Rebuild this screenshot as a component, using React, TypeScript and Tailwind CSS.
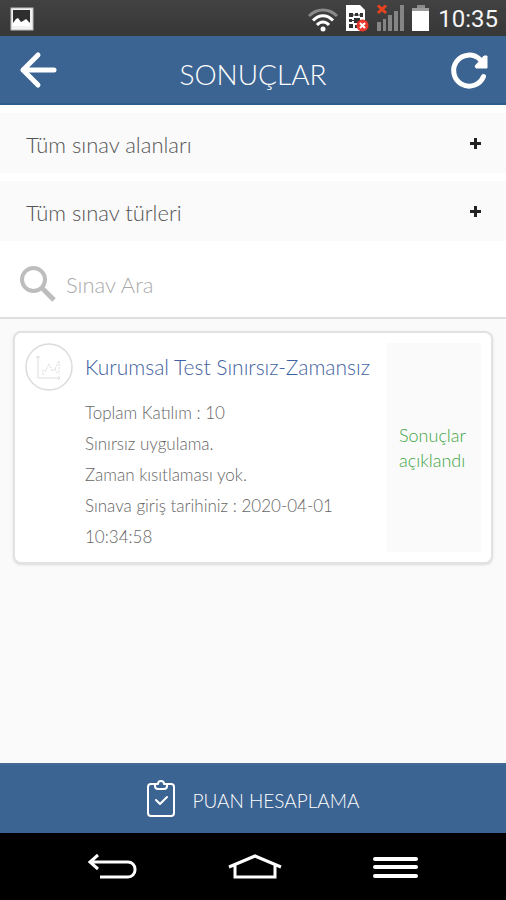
const filters = ["Tüm sınav alanları", "Tüm sınav türleri"];

const details = [
  "Toplam Katılım : 10",
  "Sınırsız uygulama.",
  "Zaman kısıtlaması yok.",
  "Sınava giriş tarihiniz : 2020-04-01 10:34:58",
];

function StatusBar() {
  return (
    <div className="flex h-9 items-center justify-between bg-linear-to-b from-[#424242] to-[#373737] px-2">
      <svg width="28" height="28" viewBox="0 0 28 28" fill="none">
        <rect x="3" y="4" width="22" height="22" fill="#f2f2f2" stroke="#bdbdbd" strokeWidth="1" />
        <rect x="5" y="6" width="17" height="16" fill="#2e2e2e" />
        <path d="M5 19l3-4 2-1 3 4 2-1 3-2 4 4v3H5z" fill="#fff" />
      </svg>
      <div className="flex items-center gap-2">
        <svg width="122" height="32" viewBox="0 0 122 32" fill="none">
          <path d="M1 14C9 6 21 6 29 14" stroke="#8a8a8a" strokeWidth="3" />
          <path d="M5 18.500C11 12 19 12 25 18.500" stroke="#fff" strokeWidth="3" />
          <path d="M9 23C12.500 19 17.500 19 21 23" stroke="#fff" strokeWidth="3" />
          <circle cx="15" cy="27" r="2.500" fill="#fff" />
          <path d="M38 3h14l5 5v21H38z" fill="#fff" />
          <path d="M41 11h4v4h-4zM47 11h3v3h-3zM52 11h3v4h-3zM41 17h3v3h-3zM46 16h6v5h-6zM41 22h4v4h-4zM47 23h3v3h-3z" fill="#333" />
          <path d="M45 13h7M44 18.500h3M52 18.500h3" stroke="#333" strokeWidth="1" />
          <circle cx="54.500" cy="23.500" r="6" fill="#e8372b" />
          <path d="M52 21l5 5M57 21l-5 5" stroke="#fff" strokeWidth="2" />
          <path d="M69 20h4v9h-4zM75 17h3v12h-3zM80 13h4v16h-4zM86 9h4v20h-4zM92 3h4v26h-4z" fill="#858585" />
          <path d="M70 3.500l8 7.500M78 3.500l-8 7.500" stroke="#e8431f" strokeWidth="3" />
          <path d="M109 3h8v4h-8z" fill="#8a8a8a" />
          <path d="M104 7h17v22h-17z" fill="#fff" />
          <path d="M104 6h17v3h-17z" fill="#9c9c9c" />
        </svg>
        <span className="pt-0.5 font-['Roboto',sans-serif] text-2xl text-[#f5f5f5]">10:35</span>
      </div>
    </div>
  );
}

function Header() {
  return (
    <header className="flex h-[69px] items-center justify-between border-b-2 border-[#2c5c88] bg-[#3c6492] px-4">
      <button type="button" aria-label="Geri">
        <svg width="44" height="44" viewBox="0 0 44 44" fill="none" stroke="#fff" strokeWidth="5" strokeLinecap="round" strokeLinejoin="round">
          <path d="M22 7L7 22l15 15M7 22h31" />
        </svg>
      </button>
      <h1 className="pt-2 text-[28px] leading-9 font-light text-white">SONUÇLAR</h1>
      <button type="button" aria-label="Yenile">
        <svg width="44" height="44" viewBox="0 0 44 44" fill="none">
          <path d="M37.500 28.500A15.500 15.500 0 1 1 34 11.500" stroke="#fff" strokeWidth="5" strokeLinecap="round" />
          <path d="M41 8v12H30L29 18l9-10z" fill="#fff" stroke="#fff" strokeWidth="1" strokeLinejoin="round" />
        </svg>
      </button>
    </header>
  );
}

function Filters() {
  return (
    <div className="flex flex-col gap-2 bg-white pt-2">
      {filters.map((f) => (
        <button
          key={f}
          type="button"
          aria-expanded="false"
          className="flex h-[60px] items-center justify-between bg-[#fafafa] pr-6 pl-[26px]"
        >
          <span className="pt-1 text-[22px] leading-7 font-light text-[#555]">{f}</span>
          <svg width="13" height="13" viewBox="0 0 13 13" stroke="#222" strokeWidth="3">
            <path d="M6.500 1v11M1 6.500h11" />
          </svg>
        </button>
      ))}
    </div>
  );
}

function Search() {
  return (
    <div className="flex h-[78px] items-center gap-2 border-b-2 border-[#dfdfdf] bg-white px-4 pt-2">
      <svg width="42" height="42" viewBox="0 0 42 42" fill="none" stroke="#bdbdbd">
        <circle cx="17.500" cy="17.500" r="11.500" strokeWidth="4" />
        <path d="M26 26l12 12" strokeWidth="5" />
      </svg>
      <input
        type="search"
        aria-label="Sınav Ara"
        placeholder="Sınav Ara"
        className="min-w-0 flex-1 bg-transparent pt-1 text-[22px] leading-7 font-light text-[#555] outline-none placeholder:text-[#aaa]"
      />
    </div>
  );
}

function ExamCard() {
  return (
    <article className="flex rounded-lg border-2 border-[#e2e2e2] bg-white p-[10px] shadow-sm">
      <svg className="shrink-0" width="48" height="48" viewBox="0 0 48 48" fill="none" stroke="#dcdcdc">
        <circle cx="24" cy="24" r="23" strokeWidth="1.500" />
        <path d="M13 14v21h21" strokeWidth="1" />
        <path d="M17 28l3-1 1 3M21 27l3-6 3 7 3-2 2 4M30 26l4-8v13M17 31h3" strokeWidth="1" strokeDasharray="2 1" />
        <path d="M11 15l2-2 2 2M33 33l2 2-2 2" strokeWidth="1" />
      </svg>
      <div className="min-w-0 flex-1 pl-3">
        <h2 className="pt-[10px] text-[21px] leading-7 font-light whitespace-nowrap text-[#3f62a0]">
          Kurumsal Test Sınırsız-Zamansız
        </h2>
        <div className="pt-4 text-[17px] leading-[31px] font-light text-[#666]">
          {details.map((d) => (
            <p key={d}>{d}</p>
          ))}
        </div>
      </div>
      <p className="flex w-[94px] shrink-0 items-center justify-center bg-[#fafafa] pl-3 text-lg leading-[25px] font-light text-[#3fa644]">
        Sonuçlar açıklandı
      </p>
    </article>
  );
}

function NavBar() {
  return (
    <nav className="flex h-[67px] items-center justify-center gap-[88px] bg-black">
      <button type="button" aria-label="Önceki">
        <svg width="52" height="32" viewBox="0 0 52 32" fill="none" stroke="#fff" strokeWidth="3">
          <path d="M11 4L3 11l8 7M3 11h38a7 7 0 0 1 7 7v1a7 7 0 0 1-7 7H13" />
        </svg>
      </button>
      <button type="button" aria-label="Ana ekran">
        <svg width="56" height="32" viewBox="0 0 56 32" fill="none" stroke="#fff" strokeWidth="3">
          <path d="M2 16L28 5l26 11M8 14v12h40V14" />
        </svg>
      </button>
      <button type="button" aria-label="Menü">
        <svg width="48" height="32" viewBox="0 0 48 32" fill="none" stroke="#fff" strokeWidth="4" strokeLinecap="round">
          <path d="M4 8h41M4 16h41M4 25h41" />
        </svg>
      </button>
    </nav>
  );
}

export default function App() {
  return (
    <div className="flex min-h-screen flex-col bg-[#fafafa] font-['Lato',sans-serif]">
      <StatusBar />
      <Header />
      <Filters />
      <Search />
      <main className="flex-1 px-[13px] pt-3">
        <ExamCard />
      </main>
      <button
        type="button"
        className="flex h-[70px] items-center justify-center gap-4 border-t-2 border-[#456a94] bg-[#3c6492] text-[19px] leading-7 font-light text-white"
      >
        <svg width="30" height="38" viewBox="0 0 30 38" fill="none" stroke="#fff" strokeWidth="2" strokeLinejoin="round">
          <path d="M9 4H5a3 3 0 0 0-3 3v26a3 3 0 0 0 3 3h20a3 3 0 0 0 3-3V7a3 3 0 0 0-3-3h-4" />
          <path d="M9 4v2a3 3 0 0 0 3 3h6a3 3 0 0 0 3-3V4h-3a3 3 0 0 0-6 0z" />
          <path d="M10 20l4 4 7-7" strokeLinecap="round" />
        </svg>
        <span className="pt-1">PUAN HESAPLAMA</span>
      </button>
      <NavBar />
    </div>
  );
}
